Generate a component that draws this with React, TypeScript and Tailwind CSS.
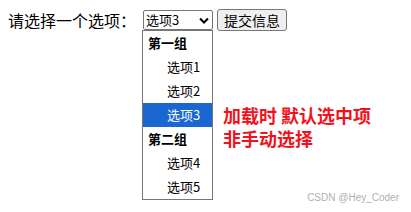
import React from "react";

const font = { fontFamily: '"Noto Sans CJK SC", "Noto Sans", sans-serif' };

export default function App() {
  const rows: { t: string; group?: boolean; sel?: boolean }[] = [
    { t: "第一组", group: true },
    { t: "选项1" },
    { t: "选项2" },
    { t: "选项3", sel: true },
    { t: "第二组", group: true },
    { t: "选项4" },
    { t: "选项5" },
  ];
  return (
    <div className="relative w-[411px] h-[212px] bg-white overflow-hidden text-black" style={font}>
      <div className="flex items-center pt-[9px] pl-[8px]">
        <span className="text-[16px] leading-[22px] w-[135px]">请选择一个选项：</span>
        <div className="flex items-center justify-between w-[70px] h-[20px] border border-[#767676] rounded-[2px] pl-[2px] pr-[3px] text-[13px] leading-[18px]">
          <span>选项3</span>
          <svg width="10" height="7" viewBox="0 0 10 7">
            <path d="M1 1.5 L5 5.5 L9 1.5" fill="none" stroke="#000" strokeWidth="2" />
          </svg>
        </div>
        <button className="ml-[4px] h-[22px] w-[70px] border border-[#767676] rounded-[3px] bg-[#efefef] text-[14px] leading-[20px]">
          提交信息
        </button>
      </div>
      <div className="flex items-start">
        <div className="ml-[142px] mt-[-1px] w-[71px] border border-[#767676] bg-white text-[13px]">
          {rows.map((r, i) => (
            <div
              key={i}
              className={
                "h-[24px] flex items-center " +
                (r.group ? "pl-[5px] font-bold " : "pl-[24px] ") +
                (r.sel ? "bg-[#1a67d2] text-white" : "")
              }
            >
              {r.t}
            </div>
          ))}
        </div>
        <div className="ml-[10px] mt-[73px] text-[18px] leading-[23px] font-bold text-[#f0131e]">
          <div>加载时 默认选中项</div>
          <div>非手动选择</div>
        </div>
      </div>
      <div className="absolute right-[12px] bottom-[7px] text-[10px] text-[#b0b0b0]" style={{ fontFamily: '"Liberation Sans", sans-serif' }}>
        CSDN @Hey_Coder
      </div>
    </div>
  );
}
